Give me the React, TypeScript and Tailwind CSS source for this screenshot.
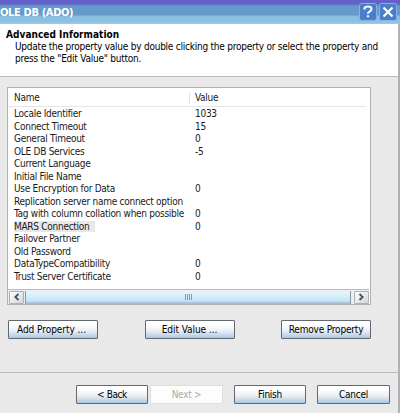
import React from "react";

const rows: [string, string][] = [
  ["Locale Identifier", "1033"],
  ["Connect Timeout", "15"],
  ["General Timeout", "0"],
  ["OLE DB Services", "-5"],
  ["Current Language", ""],
  ["Initial File Name", ""],
  ["Use Encryption for Data", "0"],
  ["Replication server name connect option", ""],
  ["Tag with column collation when possible", "0"],
  ["MARS Connection", "0"],
  ["Failover Partner", ""],
  ["Old Password", ""],
  ["DataTypeCompatibility", "0"],
  ["Trust Server Certificate", "0"],
];

function Button({ label, className = "", disabled = false }: { label: string; className?: string; disabled?: boolean }) {
  return (
    <button
      className={`flex h-[19px] shrink-0 items-center justify-center whitespace-pre rounded-[1px] border pt-px ${
        disabled
          ? "border-[#dedede] bg-[#fdfdfd] text-[#aaa]"
          : "border-[#65686f] bg-linear-to-b from-white from-20% via-[#e9edf3] via-60% to-[#a6c7e6] text-black"
      } ${className}`}
    >
      {label}
    </button>
  );
}

function Arrow({ right = false }: { right?: boolean }) {
  return (
    <div className="flex h-[13px] w-[15px] shrink-0 items-center justify-center rounded-[1px] border border-[#b0b0b4] bg-linear-to-br from-white to-[#d3d5dc]">
      <svg width="7" height="8" viewBox="0 0 7 8" fill="none" stroke="#42526a" strokeWidth="1.8">
        <path d={right ? "M1.5 1 4.7 4 1.5 7" : "M5.5 1 2.3 4 5.5 7"} />
      </svg>
    </div>
  );
}

export default function App() {
  return (
    <div className="flex h-[413px] w-[400px] flex-col overflow-hidden bg-[#e9e9e9] font-['DejaVu_Sans_Condensed','DejaVu_Sans',sans-serif] text-[10px] leading-[12px] tracking-[-0.28px] text-[#1a1a1a]">
      <header className="flex h-6 shrink-0 items-start justify-between bg-[linear-gradient(#6561cb_0_4px,#5b7ec8_5px,#659aca_6px_15px,#86bddd_16px,#8dc2e2_22px,#a4c9f0_24px)] pr-[3px]">
        <h1 className="pt-[7px] text-[11px] font-bold tracking-[-0.35px] text-white">OLE DB (ADO)</h1>
        <div className="flex gap-[2px] pt-[3px]">
          <svg width="18" height="18" viewBox="0 0 18 18" fill="none">
            <rect x=".5" y=".5" width="17" height="17" rx="2" fill="#4c7dc8" stroke="#86b1e4" />
            <path d="M5.5 6.5V5.3Q6 3.5 9 3.5t3.5 2q0 2-2 3.1-1.5.8-1.5 2.2M9 12.2v2" stroke="#f3fbff" strokeWidth="2.2" />
          </svg>
          <svg width="18" height="18" viewBox="0 0 18 18" fill="none">
            <rect x=".5" y=".5" width="17" height="17" rx="2" fill="#4c7dc8" stroke="#86b1e4" />
            <path d="m4.5 4.5 9 9m0-9-9 9" stroke="#f3fbff" strokeWidth="2.4" />
          </svg>
        </div>
      </header>

      <div className="flex min-h-0 flex-1 flex-col border-r-2 border-[#b1b1b5]">
        <section className="h-[53px] shrink-0 border-b border-[#b9b9b9] bg-white pl-[6px] pt-[5px] text-black">
          <h2 className="font-bold tracking-[0.04px]">Advanced Information</h2>
          <p className="whitespace-nowrap pl-[9px] tracking-[-0.235px]">
            Update the property value by double clicking the property or select the property and
            <br />
            press the "Edit Value" button.
          </p>
        </section>

        <main className="flex h-[296px] shrink-0 flex-col border-b border-[#b8babb] pl-[7px] pt-[10px]">
          <div className="flex h-[218px] w-[364px] flex-col border border-[#b2b2b2] bg-white">
            <div className="mr-1 flex h-[19px] shrink-0 items-center border-b border-[#e5e5e5] pl-[6px] pt-[2px]">
              <span className="w-[175px]">Name</span>
              <span className="border-l border-[#e2e2e2] pl-[5px]">Value</span>
            </div>
            <div className="flex-1 pt-px">
              {rows.map(([name, value]) => (
                <div key={name} className="flex h-[12.5px] items-center whitespace-nowrap pl-[6px]">
                  <span className="w-[181px]">
                    <span className={name === "MARS Connection" ? "bg-[#e8e8e8] pr-[6px]" : ""}>{name}</span>
                  </span>
                  <span>{value}</span>
                </div>
              ))}
            </div>
            <div className="mr-px flex h-[15px] shrink-0 items-center border-t border-[#bcbcbc] bg-[#eceef1] pl-px">
              <Arrow />
              <div className="ml-px mr-[3px] flex h-[13px] flex-1 items-center justify-center border-x border-[#8d969f] bg-linear-to-b from-[#e4f3fb] from-15% via-[#c5e6f9] via-75% to-[#a5b3c5]">
                <div className="flex h-[6px] gap-px">
                  <i className="w-px bg-[#759dbc]" />
                  <i className="w-px bg-[#759dbc]" />
                  <i className="w-px bg-[#759dbc]" />
                  <i className="w-px bg-[#759dbc]" />
                </div>
              </div>
              <Arrow right />
            </div>
          </div>
          <div className="mt-[15px] flex w-[364px] justify-between pl-px">
            <Button label="Add Property ..." className="w-[90px] pr-[3px] tracking-[-0.05px]" />
            <Button label="Edit Value ..." className="w-[90px] tracking-[-0.05px]" />
            <Button label="Remove Property" className="w-[90px] tracking-[-0.18px]" />
          </div>
        </main>

        <footer className="flex pl-[76px] pt-[12px]">
          <Button label="< Back" className="w-[72px] tracking-[-0.4px]" />
          <Button label="Next >" className="ml-[2px] w-[73px]" disabled />
          <Button label="Finish" className="ml-[11px] w-[72px]" />
          <Button label="Cancel" className="ml-[11px] w-[73px]" />
        </footer>
      </div>
    </div>
  );
}
